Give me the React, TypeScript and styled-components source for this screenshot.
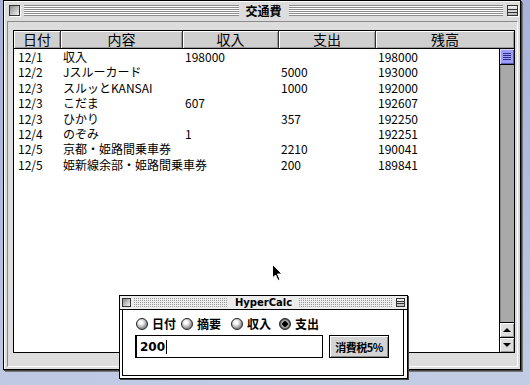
import React from "react"
import styled, {createGlobalStyle} from "styled-components"

const GlobalStyle = createGlobalStyle`
  html, body {
    margin: 0;
    padding: 0;
    overflow: hidden;
  }
  body {
    font-family: "Noto Sans CJK JP", "DejaVu Sans", sans-serif;
  }
`

type Row = [string, string, string, string, string]

const rows: Row[] = [
    ['12/1', '収入', '198000', '', '198000'],
    ['12/2', 'Jスルーカード', '', '5000', '193000'],
    ['12/3', 'スルッとKANSAI', '', '1000', '192000'],
    ['12/3', 'こだま', '607', '', '192607'],
    ['12/3', 'ひかり', '', '357', '192250'],
    ['12/4', 'のぞみ', '1', '', '192251'],
    ['12/5', '京都・姫路間乗車券', '', '2210', '190041'],
    ['12/5', '姫新線余部・姫路間乗車券', '', '200', '189841'],
]

const headers = ['日付', '内容', '収入', '支出', '残高']

const radios = [
    {label: '日付', checked: false, space: 5},
    {label: '摘要', checked: false, space: 10},
    {label: '収入', checked: false, space: 8},
    {label: '支出', checked: true, space: 0},
]

const Pointer = () => (
    <svg width="12" height="18" viewBox="0 0 12 18">
        <path d="M0.5 0.5 L0.5 14 L3.5 11 L6 16.5 L8 15.5 L5.5 10 L10 10 Z" fill="#000" stroke="#fff" strokeWidth="1"/>
    </svg>
)

export default function App() {
    return (
        <Desktop>
            <GlobalStyle/>

            {/* main window */}
            <MainWindow>
                <TitleBar>
                    <CloseBox/>
                    <Stripes/>
                    <Title>交通費</Title>
                    <Stripes/>
                    <CollapseBox/>
                </TitleBar>
                <Frame>
                    <Content>
                        <ListBox>
                            <Header>
                                {headers.map(h => <HeaderCell key={h}>{h}</HeaderCell>)}
                            </Header>
                            <ListBody>
                                <Rows>
                                    {rows.map((r, i) => (
                                        <DataRow key={i}>
                                            {r.map((c, j) => <Cell key={j} first={j === 0}>{c}</Cell>)}
                                        </DataRow>
                                    ))}
                                </Rows>
                                <ScrollBar>
                                    <Thumb/>
                                    <Track/>
                                    <ArrowBox><Tri up/></ArrowBox>
                                    <ArrowBox><Tri/></ArrowBox>
                                </ScrollBar>
                            </ListBody>
                        </ListBox>
                    </Content>
                </Frame>
            </MainWindow>

            <Cursor><Pointer/></Cursor>

            {/* floating palette */}
            <CalcWindow>
                <CalcTitleBar>
                    <SmallClose/>
                    <Dots/>
                    <CalcTitle>HyperCalc</CalcTitle>
                    <Dots/>
                    <SmallCollapse/>
                </CalcTitleBar>
                <CalcBody>
                    <CalcInner>
                        <RadioRow>
                            {radios.map(r => (
                                <RadioItem key={r.label} space={r.space}>
                                    <Radio checked={r.checked}/>
                                    <RadioLabel>{r.label}</RadioLabel>
                                </RadioItem>
                            ))}
                        </RadioRow>
                        <InputRow>
                            <Field>200<Caret/></Field>
                            <TaxButton>消費税5%</TaxButton>
                        </InputRow>
                    </CalcInner>
                </CalcBody>
            </CalcWindow>
        </Desktop>
    )
}

const Desktop = styled.div`
  position: relative;
  width: 530px;
  height: 385px;
  overflow: hidden;
  background: linear-gradient(175deg, #a7b1d8 0%, #b3bddf 55%, #c2cde5 100%);
`

const MainWindow = styled.div`
  position: absolute;
  left: 3px;
  top: 0;
  width: 518px;
  height: 370px;
  box-sizing: border-box;
  border: 1px solid #000;
  background: #dddddd;
  box-shadow: 1px 1px 0 #444, 2px 2px 0 #777;
  display: flex;
  flex-direction: column;
`

const TitleBar = styled.div`
  height: 19px;
  display: flex;
  align-items: center;
  padding: 0 2px 0 5px;
  box-shadow: inset 1px 1px 0 #fff;
`

const CloseBox = styled.div`
  width: 11px;
  height: 11px;
  box-sizing: border-box;
  border: 1px solid #333;
  background: linear-gradient(135deg, #8a8a8a, #f4f4f4);
  box-shadow: 1px 1px 0 #fff;
`

const CollapseBox = styled.div`
  position: relative;
  width: 11px;
  height: 11px;
  box-sizing: border-box;
  border: 1px solid #333;
  background: linear-gradient(#f0f0f0, #bbb);
  box-shadow: 1px 1px 0 #fff;

  &::after {
    content: "";
    position: absolute;
    left: 0;
    right: 0;
    top: 3px;
    height: 2px;
    border-top: 1px solid #333;
    border-bottom: 1px solid #333;
  }
`

const Stripes = styled.div`
  flex: 1;
  height: 11px;
  margin: 0 4px;
  background: repeating-linear-gradient(#8d8d8d 0 1px, #fff 1px 2px);
`

const Title = styled.div`
  font: bold 12px "Noto Sans CJK JP", sans-serif;
  line-height: 14px;
  padding: 0 3px;
  color: #000;
`

const Frame = styled.div`
  flex: 1;
  display: flex;
  padding: 1px 2px 2px 3px;
  box-shadow: inset 1px 0 0 #fff;
`

const Content = styled.div`
  flex: 1;
  display: flex;
  border: 1px solid;
  border-color: #8a8a8a #fff #fff #8a8a8a;
  padding: 8px 2px 13px 5px;
`

const ListBox = styled.div`
  flex: 1;
  display: flex;
  flex-direction: column;
  border: 1px solid #000;
  background: #fff;
`

const Header = styled.div`
  display: grid;
  grid-template-columns: 47px 122px 96px 97px 1fr;
  height: 18px;
  box-sizing: border-box;
  border-bottom: 1px solid #000;
`

const HeaderCell = styled.div`
  background: #cfcfcf;
  box-shadow: inset 1px 1px 0 #fff, inset -1px -1px 0 #999;
  border-right: 1px solid #333;
  font: 14px "Noto Sans CJK JP", sans-serif;
  line-height: 17px;
  text-align: center;
  color: #000;

  &:last-child {
    border-right: none;
  }
`

const ListBody = styled.div`
  flex: 1;
  display: flex;
`

const Rows = styled.div`
  flex: 1;
`

const DataRow = styled.div`
  display: grid;
  grid-template-columns: 47px 122px 96px 97px 1fr;
  height: 15.4px;
`

const Cell = styled.div<{first?: boolean}>`
  padding-left: ${p => p.first ? 4 : 2}px;
  font: 12px "Noto Sans CJK JP", sans-serif;
  line-height: 15px;
  white-space: nowrap;
  color: #000;
`

const ScrollBar = styled.div`
  width: 14px;
  display: flex;
  flex-direction: column;
  border-left: 1px solid #000;
`

const Thumb = styled.div`
  position: relative;
  height: 15px;
  background: #9d9cf6;
  border-bottom: 1px solid #000;
  box-shadow: inset 1px 1px 0 #d6d6ff, inset -1px -1px 0 #5a5ab0;

  &::after {
    content: "";
    position: absolute;
    left: 3px;
    right: 3px;
    top: 4px;
    height: 7px;
    background: repeating-linear-gradient(#2c2c8c 0 1px, transparent 1px 2px);
  }
`

const Track = styled.div`
  flex: 1;
  background: #a9a9a9;
  box-shadow: inset 1px 0 0 #888;
`

const ArrowBox = styled.div`
  height: 14px;
  display: flex;
  align-items: center;
  justify-content: center;
  background: #dddddd;
  border-top: 1px solid #000;
  box-shadow: inset 1px 1px 0 #fff, inset -1px -1px 0 #999;
`

const Tri = styled.div<{up?: boolean}>`
  width: 0;
  height: 0;
  border-left: 4px solid transparent;
  border-right: 4px solid transparent;
  ${p => p.up ? 'border-bottom: 4px solid #000;' : 'border-top: 4px solid #000;'}
`

const Cursor = styled.div`
  position: absolute;
  left: 272px;
  top: 264px;
  line-height: 0;
`

const CalcWindow = styled.div`
  position: absolute;
  left: 119px;
  top: 295px;
  width: 289px;
  height: 84px;
  box-sizing: border-box;
  border: 1px solid #000;
  background: #fff;
  box-shadow: 1px 1px 0 #444;
  display: flex;
  flex-direction: column;
`

const CalcTitleBar = styled.div`
  height: 13px;
  display: flex;
  align-items: center;
  padding: 0 2px 0 2px;
  background: #ececec;
  border-bottom: 1px solid #000;
`

const SmallClose = styled.div`
  width: 9px;
  height: 9px;
  box-sizing: border-box;
  border: 1px solid #333;
  background: linear-gradient(135deg, #8a8a8a, #f4f4f4);
`

const SmallCollapse = styled(SmallClose)`
  position: relative;
  background: linear-gradient(#f0f0f0, #bbb);

  &::after {
    content: "";
    position: absolute;
    left: 0;
    right: 0;
    top: 2px;
    height: 1px;
    border-top: 1px solid #333;
    border-bottom: 1px solid #333;
  }
`

const Dots = styled.div`
  flex: 1;
  height: 9px;
  margin: 0 3px;
  background-color: #ececec;
  background-image:
    linear-gradient(90deg, transparent 0 1px, #ececec 1px 2px),
    linear-gradient(#9a9a9a 0 1px, #ececec 1px 2px);
  background-size: 2px 2px, 2px 2px;
`

const CalcTitle = styled.div`
  font: bold 10px "DejaVu Sans", sans-serif;
  line-height: 12px;
  padding: 0 4px;
  color: #000;
`

const CalcBody = styled.div`
  flex: 1;
  display: flex;
  padding: 0 3px 2px 2px;
`

const CalcInner = styled.div`
  flex: 1;
  border: 1px solid #000;
  border-top: none;
  padding: 7px 0 0 13px;
  display: flex;
  flex-direction: column;
  gap: 4px;
`

const RadioRow = styled.div`
  display: flex;
  align-items: center;
  height: 14px;
`

const RadioItem = styled.div<{space: number}>`
  display: flex;
  align-items: center;
  gap: 4px;
  margin-right: ${p => p.space}px;
`

const Radio = styled.div<{checked?: boolean}>`
  width: 12px;
  height: 12px;
  box-sizing: border-box;
  border-radius: 50%;
  border: 1px solid #222;
  background: ${p => p.checked
    ? 'radial-gradient(circle, #000 0 2.5px, #bbb 3px, #555 5px)'
    : 'radial-gradient(circle at 40% 35%, #fff 0 1.5px, #cfcfcf 3.5px, #8a8a8a 6px)'};
`

const RadioLabel = styled.span`
  font: bold 12px "Noto Sans CJK JP", sans-serif;
  line-height: 14px;
  color: #000;
`

const InputRow = styled.div`
  display: flex;
  align-items: center;
  gap: 6px;
  margin-left: -1px;
`

const Field = styled.div`
  width: 188px;
  height: 23px;
  box-sizing: border-box;
  display: flex;
  align-items: center;
  padding-left: 3px;
  border: 1px solid #000;
  border-left-width: 2px;
  background: #fff;
  font: bold 12px "DejaVu Sans", sans-serif;
  color: #000;
`

const Caret = styled.span`
  display: inline-block;
  width: 1px;
  height: 14px;
  margin-left: 1px;
  background: #000;
`

const TaxButton = styled.div`
  width: 60px;
  height: 23px;
  box-sizing: border-box;
  display: flex;
  align-items: center;
  justify-content: center;
  border: 1px solid #000;
  background: #d4d4d4;
  box-shadow: inset 1px 1px 0 #fff, inset -1px -1px 0 #888;
  font: bold 11px "Noto Sans CJK JP", sans-serif;
  letter-spacing: -0.5px;
  color: #000;
`
